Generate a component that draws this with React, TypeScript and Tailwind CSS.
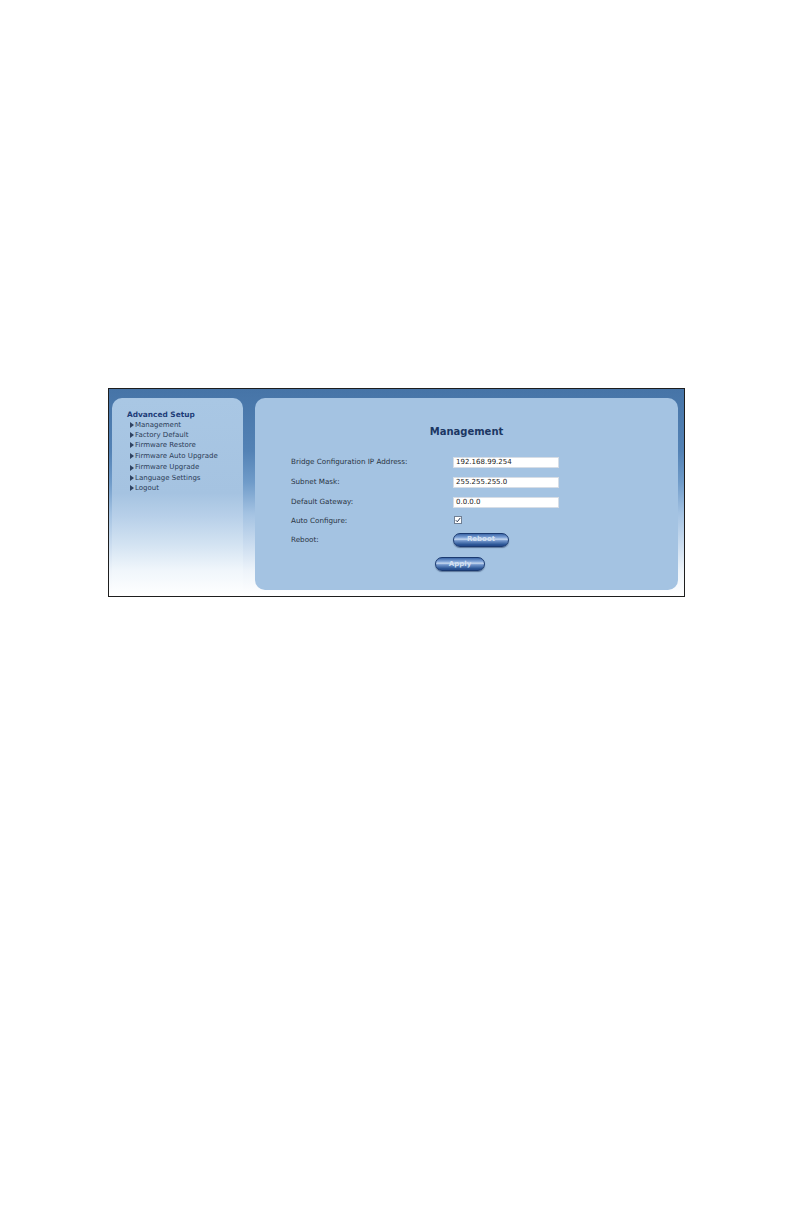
import React from "react";

const font = { fontFamily: '"DejaVu Sans", Verdana, sans-serif' };

function Arrow() {
  return (
    <svg width="4" height="6" viewBox="0 0 4 6" className="mr-[1px] shrink-0">
      <path d="M0 0 L4 3 L0 6 Z" fill="#2e4262" />
    </svg>
  );
}

function MenuItem({ label, h }: { label: string; h: string }) {
  return (
    <div className={`flex items-center pl-[3px] ${h} text-[7px] leading-none text-[#2c3c57]`}>
      <Arrow />
      <span>{label}</span>
    </div>
  );
}

function PillButton({ label, w }: { label: string; w: string }) {
  return (
    <div
      className={`${w} h-[14px] rounded-full border border-[#1b3a70] flex items-center justify-center text-[7px] font-bold leading-none text-[#d3e0f2] bg-[linear-gradient(to_bottom,#3d67a8_0%,#7fa3d7_28%,#c4d7ef_44%,#7296cc_56%,#2c5696_88%,#26498a_100%)] shadow-[0_1px_1px_rgba(20,40,80,0.5)]`}
    >
      {label}
    </div>
  );
}

function Field({ value }: { value: string }) {
  return (
    <div className="w-[106px] h-[11px] bg-white border border-[#d6dde6] flex items-center pl-[2px] text-[7px] leading-none text-[#222]">
      {value}
    </div>
  );
}

export default function App() {
  return (
    <div className="w-[792px] h-[1224px] bg-white pt-[388px] pl-[108px]" style={font}>
      <div className="w-[577px] h-[209px] border border-[#1e1e1e] flex pt-[9px] pl-[3px] bg-[linear-gradient(to_bottom,#4674a7_0%,#5382b5_30%,#6f9bc9_45%,#a3c2e2_60%,#cadcef_75%,#eef4fa_88%,#ffffff_100%)]">
        {/* Sidebar */}
        <div className="w-[131px] self-stretch rounded-t-[10px] pt-[12px] pl-[15px] bg-[linear-gradient(to_bottom,#a9c7e4_0%,#a5c3e1_48%,#b8d0e9_60%,#d3e3f2_74%,#f0f6fb_87%,#ffffff_100%)]">
          <div className="h-[10px] flex items-center text-[7.4px] font-bold leading-none text-[#1d3c78]">
            Advanced Setup
          </div>
          <MenuItem label="Management" h="h-[10px]" />
          <MenuItem label="Factory Default" h="h-[10px]" />
          <MenuItem label="Firmware Restore" h="h-[10px]" />
          <MenuItem label="Firmware Auto Upgrade" h="h-[12px]" />
          <MenuItem label="Firmware Upgrade" h="h-[11px]" />
          <MenuItem label="Language Settings" h="h-[10px]" />
          <MenuItem label="Logout" h="h-[10px]" />
        </div>

        {/* Main panel */}
        <div className="ml-[12px] w-[423px] h-[192px] rounded-[10px] bg-[#a4c3e2] pt-[27px] flex flex-col">
          <div className="h-[14px] flex items-center justify-center text-[10px] font-bold leading-none text-[#1c3763]">
            Management
          </div>
          <div className="mt-[13px] pl-[36px] flex flex-col text-[7.2px] leading-none text-[#2a3443]">
            <div className="h-[20px] flex items-center">
              <div className="w-[162px]">Bridge Configuration IP Address:</div>
              <Field value="192.168.99.254" />
            </div>
            <div className="h-[20px] flex items-center">
              <div className="w-[162px]">Subnet Mask:</div>
              <Field value="255.255.255.0" />
            </div>
            <div className="h-[20px] flex items-center">
              <div className="w-[162px]">Default Gateway:</div>
              <Field value="0.0.0.0" />
            </div>
            <div className="h-[18px] flex items-center">
              <div className="w-[163px]">Auto Configure:</div>
              <svg width="8" height="8" viewBox="0 0 8 8" className="-mt-[3px]">
                <rect x="0.5" y="0.5" width="7" height="7" fill="#ffffff" stroke="#6f7f94" />
                <path d="M1.8 4.2 L3.3 5.8 L6.3 1.9" fill="none" stroke="#2a3a55" strokeWidth="1" />
              </svg>
            </div>
            <div className="h-[19px] flex items-center">
              <div className="w-[162px]">Reboot:</div>
              <PillButton label="Reboot" w="w-[56px]" />
            </div>
          </div>
          <div className="mt-[8px] pl-[180px]">
            <PillButton label="Apply" w="w-[50px]" />
          </div>
        </div>
      </div>
    </div>
  );
}
